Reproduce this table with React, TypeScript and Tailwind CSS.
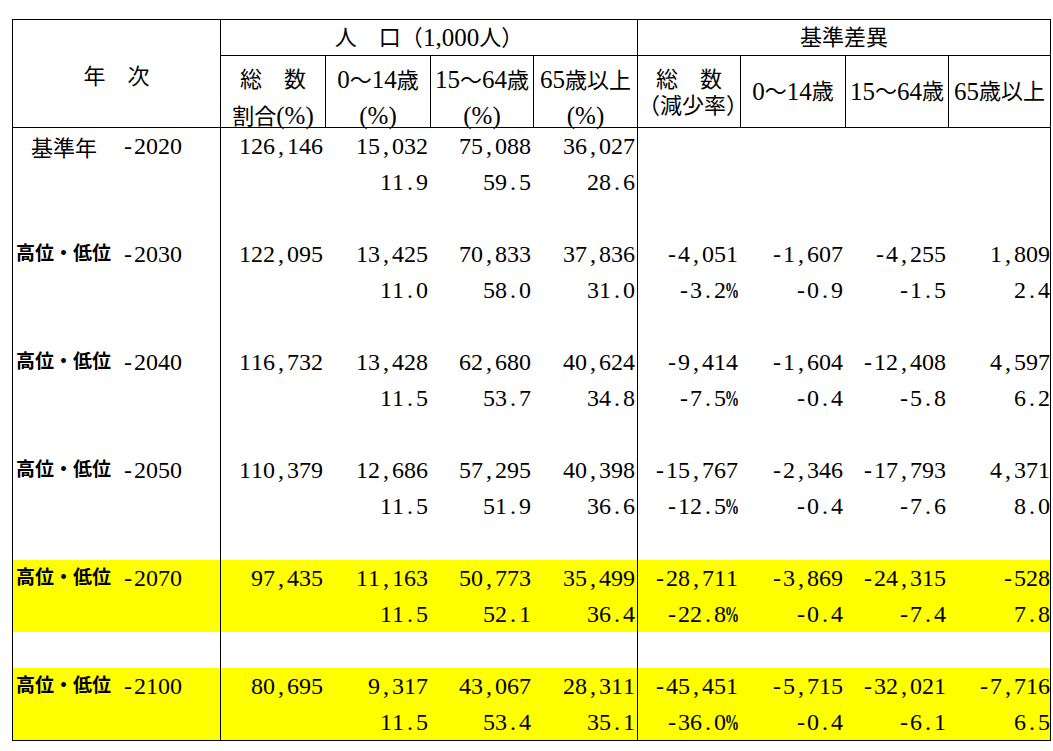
import React from "react"

const COLS = "grid grid-cols-[207px_105px_105px_103px_104px_103px_105px_103px_102px]"

type Block = {
  label: string
  year: string
  hi?: boolean
  v: string[]
  p: string[]
}

const blocks: Block[] = [
  {
    label: "基準年",
    year: "-2020",
    v: ["126,146", "15,032", "75,088", "36,027", "", "", "", ""],
    p: ["", "11.9", "59.5", "28.6", "", "", "", ""],
  },
  {
    label: "高位・低位",
    year: "-2030",
    v: ["122,095", "13,425", "70,833", "37,836", "-4,051", "-1,607", "-4,255", "1,809"],
    p: ["", "11.0", "58.0", "31.0", "-3.2%", "-0.9", "-1.5", "2.4"],
  },
  {
    label: "高位・低位",
    year: "-2040",
    v: ["116,732", "13,428", "62,680", "40,624", "-9,414", "-1,604", "-12,408", "4,597"],
    p: ["", "11.5", "53.7", "34.8", "-7.5%", "-0.4", "-5.8", "6.2"],
  },
  {
    label: "高位・低位",
    year: "-2050",
    v: ["110,379", "12,686", "57,295", "40,398", "-15,767", "-2,346", "-17,793", "4,371"],
    p: ["", "11.5", "51.9", "36.6", "-12.5%", "-0.4", "-7.6", "8.0"],
  },
  {
    label: "高位・低位",
    year: "-2070",
    hi: true,
    v: ["97,435", "11,163", "50,773", "35,499", "-28,711", "-3,869", "-24,315", "-528"],
    p: ["", "11.5", "52.1", "36.4", "-22.8%", "-0.4", "-7.4", "7.8"],
  },
  {
    label: "高位・低位",
    year: "-2100",
    hi: true,
    v: ["80,695", "9,317", "43,067", "28,311", "-45,451", "-5,715", "-32,021", "-7,716"],
    p: ["", "11.5", "53.4", "35.1", "-36.0%", "-0.4", "-6.1", "6.5"],
  },
]

// digits are 12px wide at 24px; give the other signs the same cell
function Num({ v }: { v: string }) {
  return (
    <span className="inline-flex items-baseline">
      {v.split("").map((c, i) =>
        /\d/.test(c) ? (
          <span key={i}>{c}</span>
        ) : c === "%" ? (
          <span key={i} className="inline-flex w-[12px] justify-center">
            <span className="inline-block scale-x-[0.6] font-bold">{c}</span>
          </span>
        ) : (
          <span key={i} className="inline-block w-[12px] text-center">
            {c}
          </span>
        )
      )}
    </span>
  )
}

// header text: latin parts a little larger so digits stand as tall as kanji
function Mix({ t }: { t: string }) {
  return (
    <>
      {t.split(/([0-9,()%]+)/).map((s, i) =>
        /[0-9,()%]/.test(s) ? (
          <span key={i} className="text-[25px]">
            {s}
          </span>
        ) : (
          <span key={i}>{s}</span>
        )
      )}
    </>
  )
}

function ValueCells({ vals }: { vals: string[] }) {
  return (
    <>
      {vals.map((x, i) => (
        <div
          key={i}
          className={
            "flex items-center justify-end " +
            (i === 0 || i === 4 ? "border-l border-black " : "") +
            (i === 7 ? "pr-0" : "pr-[2px]")
          }
        >
          {x && <Num v={x} />}
        </div>
      ))}
    </>
  )
}

function BlockRows({ b, last }: { b: Block; last: boolean }) {
  const bg = b.hi ? "bg-[#ffff00]" : ""
  const isBase = b.label === "基準年"
  return (
    <>
      <div className={`${COLS} h-[36px] text-[24px] ${bg}`}>
        <div className="flex items-center pl-[3px]">
          {isBase ? (
            <span className="w-[106px] pl-[15px] text-[22px] font-['Noto_Sans_CJK_JP',sans-serif]">
              {b.label}
            </span>
          ) : (
            <span className="-mt-[4px] w-[106px] text-[19px] font-bold font-['Noto_Sans_CJK_JP',sans-serif]">
              {b.label}
            </span>
          )}
          <Num v={b.year} />
        </div>
        <ValueCells vals={b.v} />
      </div>
      <div className={`${COLS} h-[36px] text-[24px] ${bg}`}>
        <div />
        <ValueCells vals={b.p} />
      </div>
      {!last && (
        <div className={`${COLS} h-[36px]`}>
          <div />
          <div className="border-l border-black" />
          <div />
          <div />
          <div />
          <div className="border-l border-black" />
          <div />
          <div />
          <div />
        </div>
      )}
    </>
  )
}

function Sub2({ a, b }: { a: string; b: string }) {
  return (
    <div className="flex h-[72px] flex-col items-center border-b border-l border-black pt-[13px]">
      <div className="h-[22px] leading-[22px] whitespace-nowrap">
        <Mix t={a} />
      </div>
      <div className="mt-[14px] h-[22px] leading-[22px] whitespace-nowrap">
        <Mix t={b} />
      </div>
    </div>
  )
}

function Sub1({ a }: { a: string }) {
  return (
    <div className="flex h-[72px] items-center justify-center whitespace-nowrap border-b border-l border-black">
      <Mix t={a} />
    </div>
  )
}

export default function App() {
  return (
    <div className="min-h-screen bg-white pl-[12px] pt-[19px] text-black font-['Liberation_Serif','Noto_Sans_CJK_JP',serif]">
      <div className="w-[1039px] border border-black">
        <div className={`${COLS} text-[22px]`}>
          <div className="row-span-2 flex h-[108px] items-center justify-center border-b border-black pt-[5px]">
            {"年　次"}
          </div>
          <div className="col-span-4 flex h-[36px] items-center justify-center border-b border-l border-black">
            <Mix t={"人　口（1,000人）"} />
          </div>
          <div className="col-span-4 flex h-[36px] items-center justify-center border-b border-l border-black">
            {"基準差異"}
          </div>
          <Sub2 a={"総　数"} b={"割合(%)"} />
          <Sub2 a={"0～14歳"} b={"(%)"} />
          <Sub2 a={"15～64歳"} b={"(%)"} />
          <Sub2 a={"65歳以上"} b={"(%)"} />
          <div className="flex h-[72px] flex-col items-center border-b border-l border-black pt-[13px]">
            <div className="h-[22px] leading-[22px]">{"総　数"}</div>
            <div className="mt-[4px] h-[22px] leading-[22px]">{"（減少率）"}</div>
          </div>
          <Sub1 a={"0～14歳"} />
          <Sub1 a={"15～64歳"} />
          <Sub1 a={"65歳以上"} />
        </div>
        {blocks.map((b, i) => (
          <BlockRows key={i} b={b} last={i === blocks.length - 1} />
        ))}
      </div>
    </div>
  )
}
